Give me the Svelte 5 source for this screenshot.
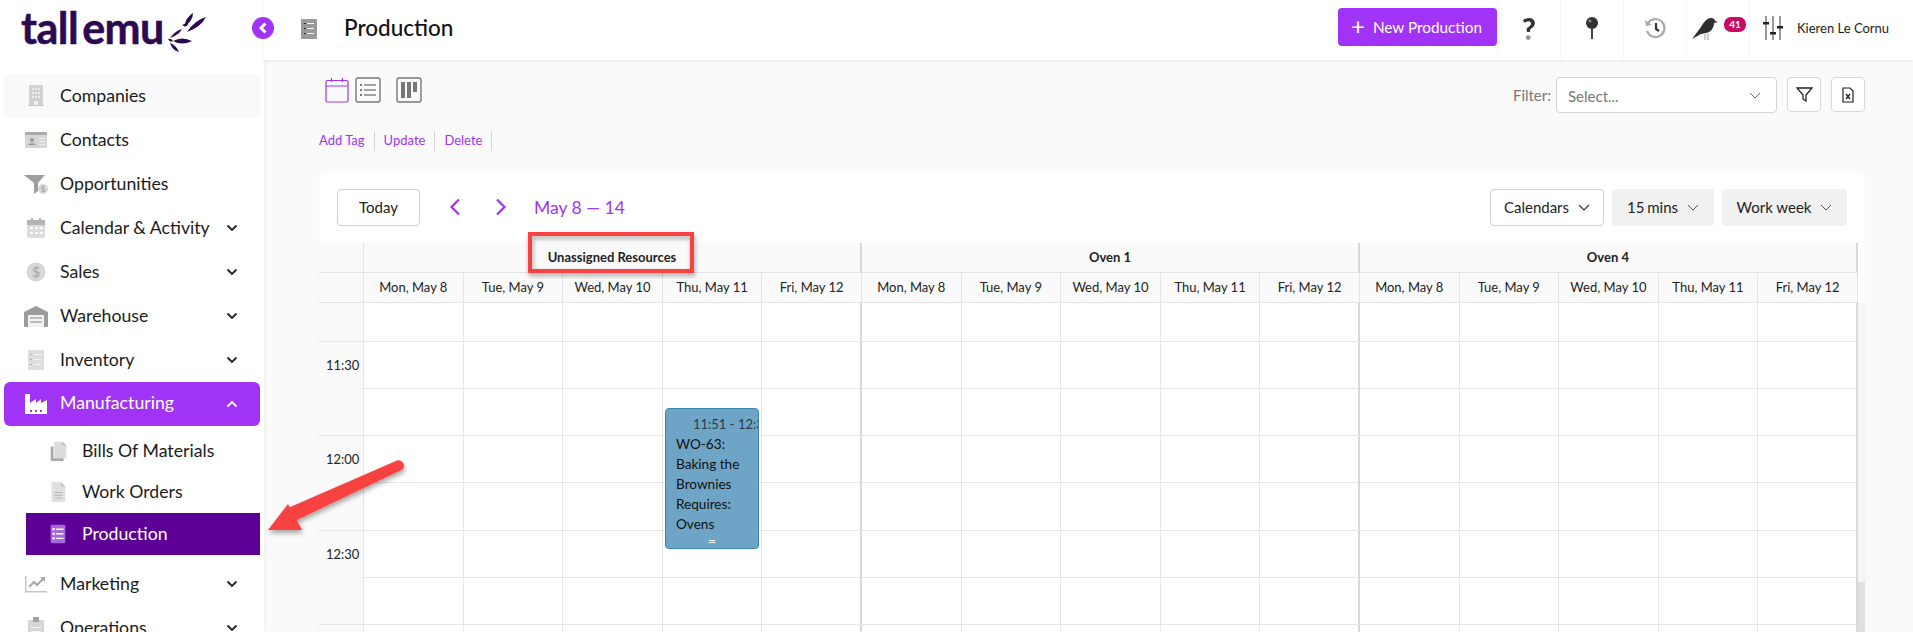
<script>
	const icons = {
		companies: '<path d="M5 1h14v20H5z" fill="#d2d2d2"/><path d="M8 4h2v2H8zM11 4h2v2h-2zM14 4h2v2h-2zM8 8h2v2H8zM11 8h2v2h-2zM14 8h2v2h-2zM8 12h2v2H8zM11 12h2v2h-2zM14 12h2v2h-2zM10 17h4v4h-4z" fill="#eee"/><path d="M4 21h16v1H4z" fill="#c4c4c4"/>',
		contacts: '<rect x="1" y="4" width="22" height="16" rx="1" fill="#d6d6d6"/><path d="M1 4h22v3H1z" fill="#aaa"/><circle cx="8" cy="12" r="2" fill="#999"/><path d="M4 17c.5-2.500 7.500-2.500 8 0z" fill="#999"/><path d="M15 10h6v1h-6zM15 13h6v1h-6zM15 16h6v1h-6z" fill="#f2f2f2"/>',
		funnel: '<path d="M0 3h21l-7 8v8l-4 3v-11z" fill="#9e9e9e"/><circle cx="19" cy="17" r="5" fill="#d8d8d8"/><text x="19" y="20" font-size="8" text-anchor="middle" fill="#999" font-family="Lato">$</text>',
		calendar: '<rect x="3" y="4" width="18" height="18" rx="2" fill="#dcdcdc"/><path d="M3 4h18v5H3z" fill="#b4b4b4"/><path d="M7 2h2v4H7zM15 2h2v4h-2z" fill="#b4b4b4"/><path d="M6 11h3v2H6zM11 11h3v2h-3zM16 11h3v2h-3zM6 16h3v2H6zM11 16h3v2h-3zM16 16h3v2h-3z" fill="#fff"/>',
		sales: '<circle cx="12" cy="12" r="9.500" fill="#d6d6d6"/><text x="12" y="17" font-size="14" text-anchor="middle" fill="#a4a4a4" font-family="Lato">$</text>',
		warehouse: '<path d="M0 8 12 2l12 6v15H0z" fill="#9c9c9c"/><path d="M4 11h16v12H4z" fill="#f2f2f2"/><path d="M6 13h12v2H6zM6 17h12v2H6z" fill="#bbb"/>',
		inventory: '<rect x="4" y="2" width="16" height="20" rx="1" fill="#dedede"/><path d="M10 6h7v1h-7zM10 11h7v1h-7zM10 16h7v1h-7z" fill="#f6f6f6"/><path d="M6 6h2v1H6zM6 11h2v1H6zM6 16h2v1H6z" fill="#aaa"/>',
		factory: '<path d="M1 2h5v9l6-4v4l5-4v4l6-3v14H1z" fill="#fff"/><path d="M6 18h2v2H6zM11 18h2v2h-2zM16 18h2v2h-2z" fill="#a033f5"/>',
		bom: '<path d="M4 7h3v13h11v3H4z" fill="#a8a8a8"/><path d="M8 2h9l4 4v14H8z" fill="#dcdcdc"/><path d="M17 2l4 4h-4z" fill="#bbb"/>',
		doc: '<path d="M5 1h10l5 5v17H5z" fill="#e0e0e0"/><path d="M15 1l5 5h-5z" fill="#c2c2c2"/><path d="M8 12h9v1H8zM8 15h9v1H8zM8 18h9v1H8z" fill="#b8b8b8"/>',
		production: '<rect x="4" y="2" width="16" height="20" rx="1.500" fill="#a668d8"/><path d="M10 6h8v1.500h-8zM10 11h8v1.500h-8zM10 16h8v1.500h-8z" fill="#fff"/><path d="M6 5.500h2.500V8H6zM6 10.500h2.500V13H6zM6 15.500h2.500V18H6z" fill="#fff"/>',
		marketing: '<path d="M1 4h1.500v15H23v1.500H1z" fill="#c4c4c4"/><path d="M5 15l5-5 3 3 6-6" fill="none" stroke="#a8a8a8" stroke-width="2"/><path d="M16 5h5v5z" fill="#a8a8a8"/>',
		operations: '<rect x="4" y="4" width="16" height="19" rx="1" fill="#d6d6d6"/><path d="M9 1h6v5H9z" fill="#a4a4a4"/><path d="M7 11h10v1H7zM7 15h10v1H7z" fill="#f4f4f4"/>'
	};

	const nav = [
		{ label: 'Companies', icon: 'companies', hover: true },
		{ label: 'Contacts', icon: 'contacts' },
		{ label: 'Opportunities', icon: 'funnel' },
		{ label: 'Calendar & Activity', icon: 'calendar', chevron: true },
		{ label: 'Sales', icon: 'sales', chevron: true },
		{ label: 'Warehouse', icon: 'warehouse', chevron: true },
		{ label: 'Inventory', icon: 'inventory', chevron: true },
		{
			label: 'Manufacturing',
			icon: 'factory',
			chevron: true,
			open: true,
			children: [
				{ label: 'Bills Of Materials', icon: 'bom' },
				{ label: 'Work Orders', icon: 'doc' },
				{ label: 'Production', icon: 'production', active: true }
			]
		},
		{ label: 'Marketing', icon: 'marketing', chevron: true },
		{ label: 'Operations', icon: 'operations', chevron: true }
	];

	const days = ['Mon, May 8', 'Tue, May 9', 'Wed, May 10', 'Thu, May 11', 'Fri, May 12'];
	const groups = ['Unassigned Resources', 'Oven 1', 'Oven 4'];
	const rows = [
		{ time: '', first: true },
		{ time: '11:30' },
		{ time: '' },
		{ time: '12:00' },
		{ time: '' },
		{ time: '12:30' },
		{ time: '' },
		{ time: '' }
	];
	const cells = Array.from({ length: 15 }, (_, i) => i);
</script>

<div class="page">
	<aside class="sidebar">
		<div class="logo">
			<span class="logo-text">tall emu</span>
			<svg width="38" height="40" viewBox="0 0 38 40" fill="#2b0a52">
				<path d="M16 15Q18 5 25 1 25 9 16 15z" />
				<path d="M19 20Q27 8 38 5 33 15 19 20z" />
				<path d="M2 26Q7 19 14 17 11 23 2 26z" />
				<path d="M5 29Q14 24 24 29 14 34 5 29z" />
				<path d="M2 31Q8 33 11 40 4 38 2 31z" />
				<path d="M14 13Q18 11 20 12 19 16 14 13z" />
				<path d="M0 27Q3 26 5 29 2 31 0 27z" />
			</svg>
		</div>
		<nav class="nav">
			{#each nav as item}
				<div class="item" class:hover={item.hover} class:open={item.open}>
					<svg class="icon" width="24" height="24" viewBox="0 0 24 24">{@html icons[item.icon]}</svg>
					<span class="label">{item.label}</span>
					{#if item.chevron}
						<svg class="chev" width="12" height="8" viewBox="0 0 12 8" fill="none" stroke="currentColor" stroke-width="1.800">
							<path d={item.open ? 'M1.500 6.500 6 2l4.500 4.500' : 'M1.500 1.500 6 6l4.500-4.500'} />
						</svg>
					{/if}
				</div>
				{#if item.children}
					<div class="sub">
						{#each item.children as child}
							<div class="sub-item" class:active={child.active}>
								<svg width="22" height="22" viewBox="0 0 24 24">{@html icons[child.icon]}</svg>
								<span>{child.label}</span>
							</div>
						{/each}
					</div>
				{/if}
			{/each}
		</nav>
	</aside>

	<div class="content">
		<header class="topbar">
			<div class="collapse">
				<svg width="10" height="12" viewBox="0 0 10 12" fill="none" stroke="#fff" stroke-width="3"><path d="M7.500 1.500 3 6l4.500 4.500" /></svg>
			</div>
			<svg class="page-icon" width="16" height="20" viewBox="0 0 16 20">
				<rect width="16" height="20" rx="1" fill="#9a9a9a" />
				<path d="M6 4h7v1H6zM6 9h7v1H6zM6 14h7v1H6z" fill="#fff" />
				<path d="M3 4h2v1H3zM3 9h2v1H3zM3 14h2v1H3z" fill="#222" />
			</svg>
			<h1>Production</h1>
			<button class="new-btn"><span class="plus">+</span>New Production</button>
			<div class="tool">
				<span class="question">?</span>
			</div>
			<div class="tool">
				<svg width="14" height="24" viewBox="0 0 14 24"><circle cx="7" cy="7" r="6" fill="#333" /><circle cx="5" cy="5" r="1.500" fill="#888" /><path d="M6 12h2v11H6z" fill="#444" /></svg>
			</div>
			<div class="tool">
				<svg width="24" height="24" viewBox="0 0 24 24" fill="none"><path d="M5 7a9 9 0 1 1-1 8" stroke="#aaa" stroke-width="2.200" /><path d="M2 4l1 6 6-1z" fill="#aaa" /><path d="M13 7v6l3 2" stroke="#333" stroke-width="2.200" /></svg>
			</div>
			<div class="tool bird">
				<svg width="28" height="26" viewBox="0 0 28 26"><path d="M14 19v6M17 18v7" stroke="#999" /><path d="M1 24 10 12c2-4 6-9 10-9 3 0 4 2 4 3l3 1-4 1c0 5-3 9-8 10l-5 1z" fill="#2f2f2f" /></svg>
				<span class="badge">41</span>
			</div>
			<div class="tool user">
				<svg width="20" height="26" viewBox="0 0 20 26" fill="#555">
					<path d="M2 1h2v24H2zM9 1h2v24H9zM16 1h2v24h-2z" fill="#999" />
					<path d="M0 7h6v2.500H0zM7 17h6v2.500H7zM14 11h6v2.500h-6z" fill="#222" />
				</svg>
				<span>Kieren Le Cornu</span>
			</div>
		</header>

		<main class="main">
			<div class="view-row">
				<div class="views">
					<svg width="24" height="26" viewBox="0 0 24 26" fill="none" stroke="#a033f5" stroke-width="1.200">
						<rect x="1" y="3.500" width="22" height="21.500" rx="1.500" />
						<path d="M1 9h22M6.500 1v4M17.500 1v4" />
					</svg>
					<svg class="list" width="26" height="26" viewBox="0 0 26 26" fill="none">
						<rect x="1" y="1" width="24" height="24" rx="2" stroke="#777" stroke-width="1.400" />
						<path d="M9 8h12M9 13h12M9 18h12" stroke="#888" stroke-width="1.400" />
						<path d="M5 7h2v2H5zM5 12h2v2H5zM5 17h2v2H5z" fill="#777" />
					</svg>
					<svg class="kanban" width="26" height="26" viewBox="0 0 26 26" fill="none">
						<rect x="1" y="1" width="24" height="24" rx="2" stroke="#777" stroke-width="1.400" />
						<path d="M5 5h4v16H5zM11 5h4v16h-4zM17 5h4v10h-4z" fill="#777" />
					</svg>
				</div>
				<div class="filter">
					<span class="filter-label">Filter:</span>
					<div class="select">
						<span>Select...</span>
						<svg width="12" height="7" viewBox="0 0 12 7" fill="none" stroke="#666" stroke-width="1"><path d="M1 1l5 5 5-5" /></svg>
					</div>
					<button class="square">
						<svg width="17" height="17" viewBox="0 0 17 17" fill="none" stroke="#222" stroke-width="1.300"><path d="M1 2h15l-6 7v6l-3-2V9z" /></svg>
					</button>
					<button class="square">
						<svg width="12" height="16" viewBox="0 0 12 16" fill="none" stroke="#222" stroke-width="1.200"><path d="M1 1h7l3 3v11H1z" /><path d="M4 7l4 5M8 7l-4 5" stroke-width="1.400" /></svg>
					</button>
				</div>
			</div>

			<div class="links">
				<span>Add Tag</span>
				<span>Update</span>
				<span>Delete</span>
			</div>

			<section class="card">
				<div class="cal-toolbar">
					<button class="today">Today</button>
					<button class="arrow prev" aria-label="Previous">
						<svg width="12" height="18" viewBox="0 0 12 18" fill="none" stroke="#a033f5" stroke-width="2.200"><path d="M10 1.500 2.500 9l7.500 7.500" /></svg>
					</button>
					<button class="arrow next" aria-label="Next">
						<svg width="12" height="18" viewBox="0 0 12 18" fill="none" stroke="#a033f5" stroke-width="2.200"><path d="M2 1.500 9.500 9 2 16.500" /></svg>
					</button>
					<span class="range">May 8 — 14</span>
					<div class="cal-actions">
						<button class="drop outline">Calendars
							<svg width="12" height="7" viewBox="0 0 12 7" fill="none" stroke="#333" stroke-width="1.200"><path d="M1 1l5 5 5-5" /></svg>
						</button>
						<button class="drop filled mins">15 mins
							<svg width="12" height="7" viewBox="0 0 12 7" fill="none" stroke="#555" stroke-width="1"><path d="M1 1l5 5 5-5" /></svg>
						</button>
						<button class="drop filled week">Work week
							<svg width="12" height="7" viewBox="0 0 12 7" fill="none" stroke="#555" stroke-width="1"><path d="M1 1l5 5 5-5" /></svg>
						</button>
					</div>
				</div>

				<div class="cal-head">
					<div class="gutter-head"></div>
					{#each groups as group}
						<div class="group-head">{group}</div>
					{/each}
					<div class="gutter-head"></div>
					{#each groups as group}
						{#each days as day}
							<div class="day-head">{day}</div>
						{/each}
					{/each}
				</div>

				<div class="cal-body">
					<div class="rows">
						{#each rows as row}
							<div class="row" class:first={row.first}>
								<div class="time">{row.time}</div>
								{#each cells as c}
									<div class="cell" class:group-end={c % 5 === 4}></div>
								{/each}
							</div>
						{/each}
						<div class="event">
							<div class="event-time">11:51 - 12:30</div>
							<div class="event-title">WO-63:<br />Baking the<br />Brownies<br />Requires:<br />Ovens</div>
							<div class="event-handle">=</div>
						</div>
					</div>
					<div class="scrollbar"><div class="thumb"></div></div>
				</div>
			</section>
		</main>
	</div>

	<svg class="annotation" width="1913" height="632" viewBox="0 0 1913 632">
		<defs>
			<filter id="sh" x="-20%" y="-20%" width="140%" height="140%">
				<feDropShadow dx="1" dy="3" stdDeviation="2.500" flood-color="#000" flood-opacity="0.350" />
			</filter>
		</defs>
		<rect x="530" y="234" width="162" height="37" fill="none" stroke="#f84343" stroke-width="4" filter="url(#sh)" />
		<g filter="url(#sh)" fill="#f84343">
			<path d="M397 460.500a5.500 5.500 0 0 1 5.500 9L295 521l-7-13z" />
			<path d="M268 530l20-26 14 26z" />
		</g>
	</svg>
</div>

<style>
	:global(body) {
		margin: 0;
		font-family: Lato, 'Liberation Sans', sans-serif;
	}

	button {
		font-family: inherit;
		cursor: pointer;
	}

	.page {
		position: relative;
		display: flex;
		width: 1913px;
		height: 632px;
		overflow: hidden;
		background: #fafafa;
		color: #1c1c1c;
	}

	.sidebar {
		flex: 0 0 264px;
		background: #fff;
		box-shadow: 1px 0 4px rgba(0, 0, 0, 0.05);
		z-index: 2;
	}

	.logo {
		display: flex;
		align-items: flex-start;
		height: 60px;
		padding-left: 21px;
		box-sizing: border-box;
		color: #2b0a52;
	}

	.logo-text {
		width: 147px;
		font-size: 43px;
		font-weight: 700;
		line-height: 56px;
		letter-spacing: -0.5px;
		word-spacing: -6px;
		-webkit-text-stroke: 0.5px #2b0a52;
		white-space: nowrap;
	}

	.logo svg {
		margin-top: 12px;
	}

	.nav {
		padding: 14px 4px 0;
	}

	.item {
		display: flex;
		align-items: center;
		height: 44px;
		padding-left: 20px;
		border-radius: 6px;
		font-size: 17.700px;
	}

	.item.hover {
		background: #fafafa;
	}

	.item.open {
		background: #a033f5;
		color: #fff;
	}

	.icon {
		flex: none;
		margin-right: 12px;
	}

	.label {
		flex: 1;
		margin-top: -2px;
	}

	.item.open .label {
		margin-top: -3px;
	}

	.chev {
		margin-right: 22px;
		color: #222;
	}

	.item.open .chev {
		color: #fff;
	}

	.sub {
		padding: 4px 0 7px 22px;
	}

	.sub-item {
		display: flex;
		align-items: center;
		height: 41.500px;
		padding-left: 21px;
		font-size: 17.700px;
	}

	.sub-item span {
		margin-top: -1px;
	}

	.sub-item svg {
		margin-right: 13px;
	}

	.sub-item.active {
		height: 42px;
		background: #5d0096;
		color: #fff;
	}

	.content {
		flex: 1;
		min-width: 0;
		display: flex;
		flex-direction: column;
	}

	.topbar {
		position: relative;
		display: flex;
		align-items: center;
		flex: 0 0 60px;
		background: #fff;
		box-shadow: 0 1px 4px rgba(0, 0, 0, 0.08);
		z-index: 3;
	}

	.collapse {
		position: absolute;
		left: -12px;
		top: 17px;
		display: flex;
		align-items: center;
		justify-content: center;
		width: 22px;
		height: 22px;
		border-radius: 50%;
		background: #a033f5;
	}

	.page-icon {
		margin-left: 37px;
		margin-top: -3px;
	}

	h1 {
		flex: 1;
		margin: -5px 0 0 27px;
		font-size: 22.500px;
		font-weight: 500;
		color: #111;
	}

	.new-btn {
		display: flex;
		align-items: center;
		height: 38px;
		width: 159px;
		padding: 0 0 0 13px;
		margin-top: -6px;
		border: 0;
		border-radius: 4px;
		background: #a033f5;
		color: #fff;
		font-size: 15.300px;
	}

	.plus {
		font-size: 24px;
		line-height: 20px;
		margin-right: 8px;
		margin-top: -3px;
	}

	.tool {
		display: flex;
		align-items: center;
		justify-content: center;
		flex: 0 0 63px;
		height: 60px;
		box-sizing: border-box;
		border-left: 1px solid #f6f6f6;
		padding-bottom: 4px;
	}

	.question {
		font-size: 30px;
		font-weight: 900;
		line-height: 1;
		background: linear-gradient(#333 68%, #999 68%);
		-webkit-background-clip: text;
		background-clip: text;
		color: transparent;
	}

	.bird {
		position: relative;
		justify-content: flex-start;
		padding-left: 4px;
	}

	.badge {
		position: absolute;
		left: 37px;
		top: 17px;
		width: 22px;
		height: 15px;
		border-radius: 7px;
		background: #c90a64;
		color: #fff;
		font-size: 10px;
		font-weight: 700;
		line-height: 15px;
		text-align: center;
	}

	.user {
		flex: 0 0 164px;
		justify-content: flex-start;
		gap: 14px;
		padding-left: 13px;
		font-size: 13px;
		white-space: nowrap;
	}

	.main {
		flex: 1;
		min-height: 0;
		padding: 17px 48px 0 55px;
	}

	.view-row {
		display: flex;
		justify-content: space-between;
		align-items: flex-start;
		height: 36px;
	}

	.views {
		display: flex;
		padding: 0 0 0 6px;
	}

	.views .list {
		margin-left: 6px;
	}

	.views .kanban {
		margin-left: 15px;
	}

	.filter {
		display: flex;
		align-items: flex-start;
	}

	.filter-label {
		margin-right: 5px;
		font-size: 15px;
		line-height: 37px;
		color: #777;
	}

	.select {
		display: flex;
		align-items: center;
		justify-content: space-between;
		box-sizing: border-box;
		width: 221px;
		height: 36px;
		padding: 1px 15px 0 11px;
		margin-right: 10px;
		border: 1px solid #d4d4d4;
		border-radius: 4px;
		background: #fff;
		font-size: 15px;
		color: #777;
	}

	.square {
		display: flex;
		align-items: center;
		justify-content: center;
		box-sizing: border-box;
		width: 34px;
		height: 35px;
		margin-right: 10px;
		padding: 0;
		border: 1px solid #d9d9d9;
		border-radius: 4px;
		background: #fff;
	}

	.square:last-child {
		margin-right: 0;
	}

	.links {
		display: flex;
		height: 20px;
		margin-top: 18px;
		font-size: 13px;
		line-height: 19px;
		color: #a033f5;
	}

	.links span {
		padding-right: 9px;
		margin-right: 9px;
		border-right: 1px solid #d4d4d4;
	}

	.card {
		margin-top: 20px;
		height: 470px;
		border-radius: 8px 8px 0 0;
		background: #fff;
		box-shadow: 0 0 3px rgba(0, 0, 0, 0.04);
		overflow: hidden;
	}

	.cal-toolbar {
		display: flex;
		align-items: center;
		height: 72px;
		padding: 0 18px;
		box-sizing: border-box;
	}

	.today {
		width: 83px;
		height: 37px;
		padding: 0;
		border: 1px solid #cfcfcf;
		border-radius: 4px;
		background: #fff;
		font-size: 15px;
		color: #222;
	}

	.arrow {
		display: flex;
		padding: 0;
		border: 0;
		background: none;
	}

	.prev {
		margin-left: 29px;
	}

	.next {
		margin-left: 34px;
	}

	.range {
		margin-left: 27px;
		font-size: 17.500px;
		color: #a033f5;
	}

	.cal-actions {
		display: flex;
		gap: 8px;
		margin-left: auto;
	}

	.drop {
		display: flex;
		align-items: center;
		justify-content: center;
		gap: 9px;
		box-sizing: border-box;
		height: 37px;
		padding: 0;
		border: 1px solid transparent;
		border-radius: 4px;
		font-size: 15px;
		color: #222;
	}

	.drop.outline {
		width: 114px;
		background: #fff;
		border-color: #d0d0d0;
	}

	.drop.filled {
		background: #f1f1f1;
	}

	.drop.mins {
		width: 102px;
		word-spacing: -1px;
	}

	.drop.week {
		width: 125px;
	}

	.cal-head {
		display: grid;
		grid-template-columns: 45px repeat(15, 99.600px);
		width: 1539px;
		background: #fafafa;
		font-size: 13px;
		color: #222;
	}

	.gutter-head {
		height: 30px;
		box-sizing: border-box;
		border-right: 1px solid #e4e4e4;
		border-bottom: 1px solid #e4e4e4;
	}

	.group-head {
		grid-column: span 5;
		height: 30px;
		box-sizing: border-box;
		border-right: 2px solid #d8d8d8;
		border-bottom: 1px solid #e4e4e4;
		font-weight: 700;
		line-height: 28px;
		text-align: center;
	}

	.day-head {
		height: 30px;
		box-sizing: border-box;
		border-right: 1px solid #e4e4e4;
		border-bottom: 1px solid #e4e4e4;
		line-height: 29px;
		text-align: center;
	}

	.cal-body {
		display: flex;
		align-items: flex-start;
	}

	.rows {
		position: relative;
		width: 1539px;
	}

	.row {
		display: grid;
		grid-template-columns: 45px repeat(15, 99.600px);
		height: 47.150px;
		box-sizing: border-box;
		border-bottom: 1px solid #e6e6e6;
	}

	.row.first {
		height: 39px;
	}

	.time {
		background: #fafafa;
		border-right: 1px solid #e4e4e4;
		padding-left: 7px;
		font-size: 13px;
		line-height: 47px;
		color: #222;
	}

	.cell {
		border-right: 1px solid #e6e6e6;
	}

	.cell.group-end {
		border-right: 2px solid #d8d8d8;
	}

	.event {
		position: absolute;
		left: 346px;
		top: 105px;
		box-sizing: border-box;
		width: 94px;
		height: 141px;
		padding: 8px 0 0 10px;
		border: 1px solid #3a87ad;
		border-radius: 4px;
		background: #6ea5c6;
		overflow: hidden;
		font-size: 13.600px;
		color: #111;
	}

	.event-time {
		margin-left: 17px;
		font-size: 13px;
		line-height: 14px;
		white-space: nowrap;
		color: #2a3a46;
	}

	.event-title {
		margin-top: 3px;
		line-height: 20px;
	}

	.event-handle {
		position: absolute;
		left: 0;
		right: 0;
		bottom: 1px;
		font-size: 14px;
		line-height: 12px;
		text-align: center;
		color: #fff;
	}

	.scrollbar {
		position: relative;
		width: 7px;
		height: 340px;
		background: #f5f5f5;
	}

	.thumb {
		position: absolute;
		top: 279px;
		bottom: 0;
		width: 100%;
		background: #e0e0e0;
	}

	.annotation {
		position: absolute;
		left: 0;
		top: 0;
		z-index: 5;
		pointer-events: none;
	}
</style>
